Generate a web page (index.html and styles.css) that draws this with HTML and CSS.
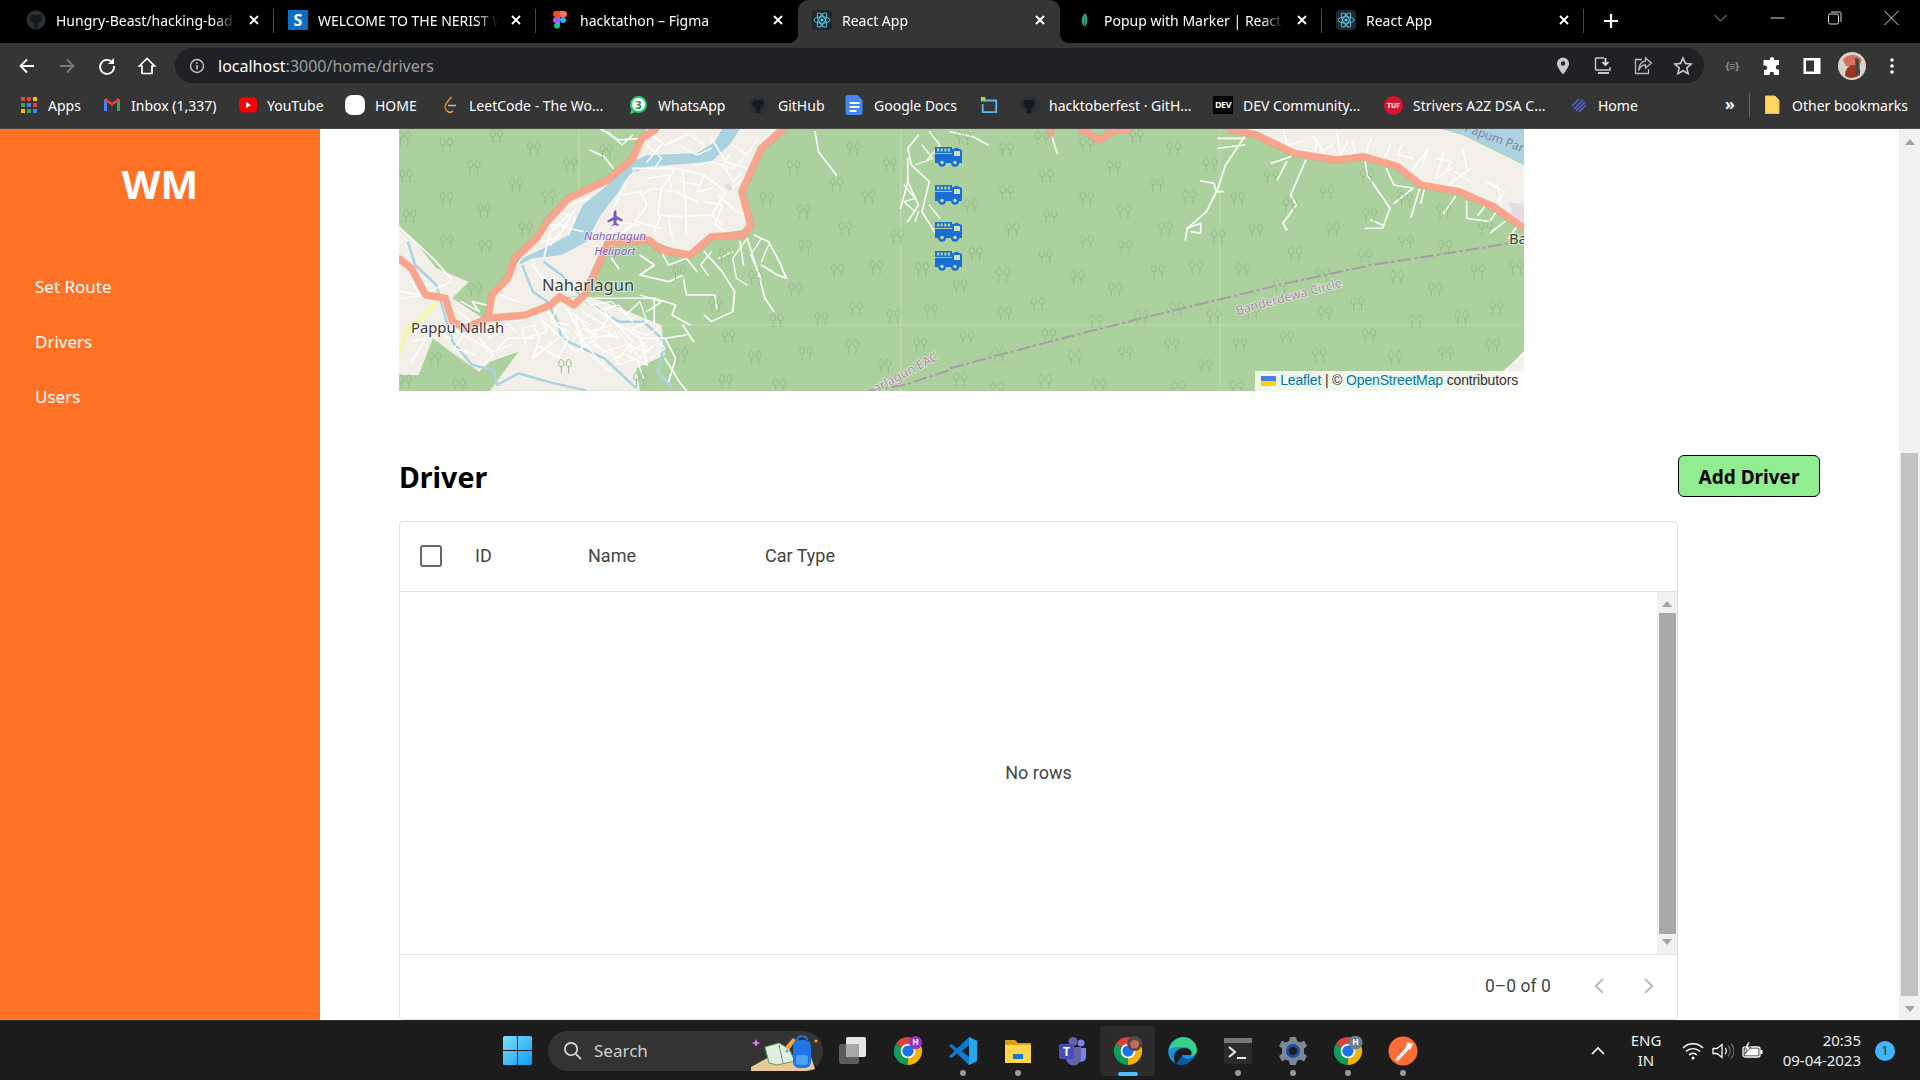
FILE: index.html
```html
<!DOCTYPE html>
<html lang="en">
<head>
<meta charset="utf-8">
<title>React App</title>
<link rel="stylesheet" href="styles.css">
</head>
<body>
<svg class="defs" aria-hidden="true">
  <defs>
    <g id="tree" class="tree" transform="scale(1.15)"><path d="M-9 18V-2M9 18V-2"/><path d="M-9 -20C-15 -14 -17 -6 -14 -2C-12 1 -6 1 -4 -2C-1 -6 -3 -14 -9 -20Z"/><path d="M9 -20C3 -14 1 -6 4 -2C6 1 12 1 14 -2C17 -6 15 -14 9 -20Z"/></g>
    <symbol id="truck" viewBox="0 0 27 23"><path fill="#1a6fd6" fill-rule="evenodd" d="M0 3h17v6H0zM2 4.600v2.800h2.200V4.600zM5.600 4.600v2.800h2.200V4.600zM9.200 4.600v2.800h2.200V4.600zM12.800 4.600v2.800H15V4.600z"/><path fill="#1a6fd6" d="M0 10h17V5h2a3 3 0 0 1 5 0h.5A2.500 2.500 0 0 1 27 7.500V19H0z"/><rect x="19" y="7" width="6" height="5" fill="#cfe3c4"/><circle cx="7" cy="18.500" r="4.200" fill="#1a6fd6"/><circle cx="7" cy="18.500" r="1.700" fill="#cfe3c4"/><circle cx="20" cy="18.500" r="4.200" fill="#1a6fd6"/><circle cx="20" cy="18.500" r="1.700" fill="#cfe3c4"/></symbol>
    <symbol id="gh" viewBox="0 0 20 20"><circle cx="10" cy="10" r="9.500" fill="#2a3138"/><path fill="#16191d" d="M5 6.500 5.600 4 8 5.200a8 8 0 0 1 4 0L14.400 4l.6 2.500c1.300 1.600 1.200 5.200-1.500 6.300-.7.3-1.300.4-1.300 1.200V18H7.800v-4c0-.8-.6-.9-1.300-1.200C3.800 11.700 3.700 8.100 5 6.500Z"/></symbol>
    <symbol id="react" viewBox="0 0 20 20"><rect width="20" height="20" rx="4" fill="#20272e"/><g fill="none" stroke="#61dafb" stroke-width=".9"><ellipse cx="10" cy="10" rx="8" ry="3.200"/><ellipse cx="10" cy="10" rx="8" ry="3.200" transform="rotate(60 10 10)"/><ellipse cx="10" cy="10" rx="8" ry="3.200" transform="rotate(120 10 10)"/></g><circle cx="10" cy="10" r="1.500" fill="#61dafb"/></symbol>
    <symbol id="x" viewBox="0 0 12 12"><path d="M2 2l8 8M10 2l-8 8" stroke="#fff" stroke-width="1.800" fill="none"/></symbol>
    <symbol id="chrome" viewBox="0 0 32 32"><path fill="#db4437" d="M16 16 3 8.500A15 15 0 0 1 29 8.500Z"/><path fill="#0f9d58" d="M16 16 3 8.500A15 15 0 0 0 16 31Z"/><path fill="#f4b400" d="M16 16 29 8.500A15 15 0 0 1 16 31Z"/><circle cx="16" cy="16" r="7.800" fill="#fff"/><circle cx="16" cy="16" r="6" fill="#1a73e8"/></symbol>
  </defs>
</svg>

<header class="tabstrip">
  <div class="tab sep"><svg class="fav"><use href="#gh"/></svg><span class="tab-title">Hungry-Beast/hacking-bad-</span><svg class="tab-x"><use href="#x"/></svg></div>
  <div class="tab sep"><span class="fav fav-s">S</span><span class="tab-title">WELCOME TO THE NERIST WEBSITE</span><svg class="tab-x"><use href="#x"/></svg></div>
  <div class="tab"><svg class="fav" viewBox="0 0 20 20"><path fill="#f24e1e" d="M6 1h4v6H6a3 3 0 0 1 0-6z"/><path fill="#ff7262" d="M10 1h4a3 3 0 0 1 0 6h-4z"/><path fill="#a259ff" d="M6 7h4v6H6a3 3 0 0 1 0-6z"/><circle cx="13" cy="10" r="3" fill="#1abcfe"/><path fill="#0acf83" d="M6 13h4v3a3 3 0 1 1-4-3z"/></svg><span class="tab-title">hacktathon – Figma</span><svg class="tab-x"><use href="#x"/></svg></div>
  <div class="tab tab-active"><svg class="fav"><use href="#react"/></svg><span class="tab-title">React App</span><svg class="tab-x"><use href="#x"/></svg></div>
  <div class="tab sep"><svg class="fav" viewBox="0 0 20 20"><path fill="#2f9d7e" d="M11 3c3 3 3.500 9 0 14-4-2-5-9 0-14z"/><path fill="#0b3b2e" d="M11 6v10l-1 2z"/></svg><span class="tab-title">Popup with Marker | React Leaflet</span><svg class="tab-x"><use href="#x"/></svg></div>
  <div class="tab sep"><svg class="fav"><use href="#react"/></svg><span class="tab-title">React App</span><svg class="tab-x"><use href="#x"/></svg></div>
  <div class="newtab"><svg viewBox="0 0 20 20"><path d="M10 3v14M3 10h14" stroke="#fff" stroke-width="2.200"/></svg></div>
  <div class="winctl">
    <svg viewBox="0 0 14 14"><path d="M1 4l6 6 6-6" fill="none" stroke="#aaa"/></svg>
    <svg viewBox="0 0 14 14"><path d="M0 7h14" stroke="#ddd"/></svg>
    <svg viewBox="0 0 14 14"><rect x="1" y="3" width="10" height="10" rx="1.500" fill="none" stroke="#ddd"/><path d="M3.500 1H12a1.500 1.500 0 0 1 1.500 1.500V11" fill="none" stroke="#ddd"/></svg>
    <svg viewBox="0 0 14 14"><path d="M0 0l14 14M14 0 0 14" stroke="#ddd"/></svg>
  </div>
</header>

<nav class="toolbar">
  <div class="tool"><svg viewBox="0 0 20 20"><path d="M17 10H4M10 3.500 3.500 10l6.500 6.500" fill="none" stroke="#fff" stroke-width="1.800"/></svg></div>
  <div class="tool"><svg viewBox="0 0 20 20"><path d="M3 10h13M10 3.500l6.500 6.500-6.500 6.500" fill="none" stroke="#7a7a7a" stroke-width="1.800"/></svg></div>
  <div class="tool"><svg viewBox="0 0 20 20"><path d="M15.500 6.500A7 7 0 1 0 17 10" fill="none" stroke="#fff" stroke-width="1.800"/><path d="M17 2v6h-6z" fill="#fff"/></svg></div>
  <div class="tool"><svg viewBox="0 0 20 20"><path d="M10 2.500 2.500 10H5v7.500h10V10h2.500z" fill="none" stroke="#fff" stroke-width="1.700"/></svg></div>
  <div class="omni">
    <svg class="info" viewBox="0 0 16 16"><circle cx="8" cy="8" r="6.500" fill="none" stroke="#c6c6c6" stroke-width="1.400"/><path d="M8 7v4.500M8 4.300v1.600" stroke="#c6c6c6" stroke-width="1.500"/></svg>
    <div class="url"><span class="url-host">localhost</span>:3000/home/drivers</div>
    <div class="tool"><svg viewBox="0 0 20 20"><path fill="#c8c8c8" d="M10 1.500a6 6 0 0 0-6 6c0 4.200 6 11 6 11s6-6.800 6-11a6 6 0 0 0-6-6zm0 8.200a2.200 2.200 0 1 1 0-4.400 2.200 2.200 0 0 1 0 4.400z"/></svg></div>
    <div class="tool"><svg viewBox="0 0 20 20"><path d="M11 2H3.500a1 1 0 0 0-1 1v10a1 1 0 0 0 1 1H17v-3" fill="none" stroke="#c8c8c8" stroke-width="1.500"/><path d="M12.500 2v6M9.500 6l3 3 3-3" fill="none" stroke="#e8e8e8" stroke-width="1.700"/><path d="M5 16h11v2H5z" fill="#c8c8c8"/></svg></div>
    <div class="tool"><svg viewBox="0 0 20 20"><path d="M9 3.500H2.500v14h13V13" fill="none" stroke="#bbb" stroke-width="1.300"/><path d="M12.500 2l6 5-6 5V9C9 9 7 11 5.500 14.500 6 9 8.500 5.500 12.500 5z" fill="none" stroke="#bbb" stroke-width="1.300"/></svg></div>
    <div class="tool"><svg viewBox="0 0 20 20"><path d="m10 2 2.400 5.400 5.800.6-4.400 3.900 1.300 5.800L10 14.700l-5.100 3 1.300-5.800L1.800 8l5.800-.6z" fill="none" stroke="#c8c8c8" stroke-width="1.600"/></svg></div>
  </div>
  <div class="tool-right">
    <div class="tool"><span class="ext-mini">{≡}</span></div>
    <div class="tool"><svg viewBox="0 0 20 20"><path fill="#fff" d="M8 3a2 2 0 0 1 4 0v1h5v5h-1a2.300 2.300 0 0 0 0 4.600h1V19h-5v-1a2.200 2.200 0 0 0-4.400 0v1H2v-5h1a2.300 2.300 0 0 0 0-4.600H1.500V4H8z"/></svg></div>
    <div class="tool"><svg viewBox="0 0 20 20"><rect x="1.500" y="2" width="17" height="16" fill="#fff"/><rect x="4" y="4.500" width="8" height="11" fill="#353535"/></svg></div>
    <div class="tool tool-avatar"><svg viewBox="0 0 28 28"><circle cx="14" cy="14" r="14" fill="#d9d3cc"/><path d="M5 8c3-6 15-7 19 0l-3 6H8z" fill="#d8705c"/><path d="M7 24c0-7 4-11 8-11s7 4 7 10a14 14 0 0 1-15 1z" fill="#9c3526"/><path d="M17 6l4 1 1 14-4 3z" fill="#4a4640"/></svg></div>
    <div class="tool"><svg viewBox="0 0 20 20"><circle cx="10" cy="4" r="1.800" fill="#fff"/><circle cx="10" cy="10" r="1.800" fill="#fff"/><circle cx="10" cy="16" r="1.800" fill="#fff"/></svg></div>
  </div>
</nav>

<nav class="bookmarks">
  <div class="bm bm-apps"><svg viewBox="0 0 18 18"><rect x="1" y="1" width="4" height="4" fill="#ea4335"/><rect x="7" y="1" width="4" height="4" fill="#ea4335"/><rect x="13" y="1" width="4" height="4" fill="#fbbc04"/><rect x="1" y="7" width="4" height="4" fill="#34a853"/><rect x="7" y="7" width="4" height="4" fill="#4285f4"/><rect x="13" y="7" width="4" height="4" fill="#ea4335"/><rect x="1" y="13" width="4" height="4" fill="#fbbc04"/><rect x="7" y="13" width="4" height="4" fill="#34a853"/><rect x="13" y="13" width="4" height="4" fill="#4285f4"/></svg><span>Apps</span></div>
  <div class="bm bm-inbox"><svg viewBox="0 0 18 18"><path fill="#4285f4" d="M1 15V4l3 2v9z"/><path fill="#34a853" d="M14 15V6l3-2v11z"/><path fill="#ea4335" d="M1 4c0-1.500 1.500-2 2.500-1.200L9 7l5.500-4.200C15.500 2 17 2.500 17 4l-8 6z"/></svg><span>Inbox (1,337)</span></div>
  <div class="bm bm-yt"><svg viewBox="0 0 18 18"><rect y="1.500" width="18" height="15" rx="4" fill="#f00"/><path d="M7 6v6l5-3z" fill="#fff"/></svg><span>YouTube</span></div>
  <div class="bm bm-home"><svg class="ic20" viewBox="0 0 20 20"><rect width="20" height="20" rx="7" fill="#fff"/></svg><span>HOME</span></div>
  <div class="bm bm-leet"><svg viewBox="0 0 18 18"><path d="M10 1 5 8c-1.500 2-1 5 1 7" fill="none" stroke="#c9892f" stroke-width="1.600"/><path d="M6 15c2 1.800 4 1.800 6 0" fill="none" stroke="#f0a030" stroke-width="1.600"/><path d="M7 9.500h8" stroke="#b8b8b8" stroke-width="1.600"/><circle cx="10" cy="2" r="1.200" fill="#d6522c"/></svg><span>LeetCode - The Wo...</span></div>
  <div class="bm bm-wa"><svg class="ic20" viewBox="0 0 20 20"><circle cx="10.500" cy="9.500" r="8.500" fill="#25d366"/><path d="M2 19l1.500-5 3.500 3.500z" fill="#25d366"/><circle cx="10.500" cy="9.500" r="6.500" fill="#fff"/><text x="10.500" y="13.500" class="wa-num">3</text></svg><span>WhatsApp</span></div>
  <div class="bm bm-gh"><svg class="ic20"><use href="#gh"/></svg><span>GitHub</span></div>
  <div class="bm bm-docs"><svg class="ic19" viewBox="0 0 18 20"><path d="M2 0h10l5 5v13a2 2 0 0 1-2 2H2a2 2 0 0 1-2-2V2a2 2 0 0 1 2-2z" fill="#4285f4"/><path d="M4 7h10v2H4zm0 4h10v2H4zm0 4h7v2H4z" fill="#fff"/></svg><span>Google Docs</span></div>
  <div class="bm bm-sq"><svg viewBox="0 0 20 20"><path d="M5 5h13v13H3V9" fill="none" stroke="#5ab8f0" stroke-width="2"/><rect x="1" y="1" width="5" height="5" fill="#9ad45a"/></svg></div>
  <div class="bm bm-hack"><svg class="ic20"><use href="#gh"/></svg><span>hacktoberfest · GitH...</span></div>
  <div class="bm bm-dev"><span class="dev-logo">DEV</span><span>DEV Community...</span></div>
  <div class="bm bm-tuf"><span class="tuf-logo">TUF</span><span>Strivers A2Z DSA C...</span></div>
  <div class="bm bm-ln"><svg viewBox="0 0 18 18"><path d="M2 10 9 3M4 13l9-9M6 15l9-9M9 16l7-7" stroke="#4d66e0" stroke-width="1.500" fill="none"/></svg><span>Home</span></div>
  <div class="bm-more">»</div>
  <div class="bm-other"><svg viewBox="0 0 16 20"><path d="M1.500 1H11l4 4v13.500H1.500z" fill="#fdd663" stroke="#f0c040"/></svg><span>Other bookmarks</span></div>
</nav>

<div class="page">
  <aside class="sidebar">
    <div class="logo">WM</div>
    <ul class="side-nav">
      <li>Set Route</li>
      <li>Drivers</li>
      <li>Users</li>
    </ul>
  </aside>

  <main class="main">
    <section class="map">
      <svg class="map-svg" viewBox="0 0 1125 262" width="1125" height="262">
        <rect width="1125" height="262" fill="#add19e"/>
        <!-- left half, coordinates read off the crop -->
        <g class="map-geo" transform="translate(-9 -4) scale(.3571 .3333)">
          <path class="seam" d="M760 600H1568M530 12V600M1430 12V797"/>
          <path class="urban" d="M720 12H1100L1040 70 985 200 1015 310 900 330 840 390 730 345 610 350 540 510 480 520 430 550 280 575 280 510 340 440 410 330 480 230 600 170 680 100Z"/>
          <path class="urban" d="M25 300 70 350 130 430 220 470 175 520 260 580 540 510 600 530 760 600 770 690 690 730 700 797H280L360 680 280 710 250 740 170 680 120 640 80 750 25 750Z"/>
          <path class="pale" d="M940 175l15 5 3 12-10 5-10-12z"/>
          <path class="water" d="M930 12H980L950 60 900 110 720 125 670 150 640 200 590 270 550 350 480 390 400 400 360 420 370 400 440 365 500 330 540 240 620 170 660 120 720 90 860 85 910 50Z"/>
          <path class="river" d="M370 420 400 500 440 530 470 590 480 640 600 700 690 790M430 410 480 450 550 530 640 590 710 590 770 650 750 740 790 790M50 350 70 420 130 480 150 560 175 650 230 720 290 735 300 780 360 745 440 770 550 797"/>
          <path class="road" d="M560 75 600 95 625 130M590 12 640 45 700 40M1190 20 1200 80 1250 150M680 130H800L880 150 940 200 900 270 800 275 750 270 760 190 800 130M880 150 860 200M720 20 770 60 830 30M760 60 720 110M900 40 940 110 1000 130M950 90 930 130M820 140 830 270M860 200 900 190M800 200 860 230M900 270 930 300M830 275 830 330M760 270 740 320M650 210 700 200 720 240 680 300 640 330M620 290 700 300M500 270 450 320 430 400M470 300 540 320M1020 330 1060 350 1090 410 1110 460 1085 450 1040 420M1000 340 1030 440 1050 520 1075 560M980 350 990 420M880 380 930 440 965 500 960 560 900 590 880 570M820 450 830 510 910 510 915 550M700 390 740 420 700 450 780 470 820 450M620 400 640 430M1450 100 1450 170 1430 250M1480 30 1450 70 1460 120 1510 170 1490 260 1530 330M1450 170 1480 240 1450 290M760 380 780 420 830 400 860 440M200 530 250 560 230 530 290 545M400 600 420 640 400 700 470 640M290 500 330 520 360 530M400 420 440 480 480 500M540 520 640 600 700 640 770 640 800 700 780 770M560 520 740 520 740 600M600 560 680 650 640 700 570 660M620 600 560 620 520 570 540 680M700 640 720 720 660 690M740 520 800 540 790 570 840 600M820 600 850 650M770 640 830 630M430 590 520 680 580 640M490 540 540 640 620 630M300 670 330 640 400 640M30 500 90 510 170 470M50 330 120 400 170 460M170 610 290 680 340 660M770 700 810 770 830 797M460 600 500 620M630 620 640 640 610 630"/>
          <path class="road road-thin" d="M690 130 660 170 640 220 620 260 650 300 600 340M720 160 780 150 790 200 740 190 700 210M810 170 870 180M860 120 900 110 960 130 990 100M960 60 1000 90 1030 40M940 130 960 170 980 150M920 210 970 260 1000 270M930 240 910 300 940 320M880 230 930 240M780 280 790 340M690 290 760 310M500 240 560 220M470 260 520 280 500 330M440 300 500 300M420 350 470 340M520 250 480 320 450 360M610 20 650 60 680 30M720 60 760 100 740 130M810 60 860 90 900 70M840 30 880 60M1000 150 960 190M560 540 620 530 660 570 700 530 720 590 680 610M540 560 600 600 560 640 600 680 660 660 720 680 690 620M640 620 700 700 740 660M610 660 640 720 690 700 710 760M560 690 620 740M500 560 560 600M440 560 500 640 470 700M350 590 420 570 440 620 380 640M230 600 280 640 320 600M190 560 240 600M90 520 60 470 110 480M30 520 110 510M210 620 180 670 240 690M130 620 170 640M60 650 100 640 60 710M410 660 480 700M250 640 290 690 260 720M700 510 760 530 720 560M1000 340 960 400 970 460 1000 480M1040 340 1010 390 1040 460M1060 360 1040 410M900 380 870 420 890 450M960 380 920 400M1490 60 1520 100 1470 120M1510 20 1540 60 1500 110M1440 180 1470 220 1440 230 1470 260M1480 260 1470 290M1510 240 1540 280M580 560 640 540 680 590M620 570 590 610 640 640M660 610 720 630 750 610M670 680 720 650M590 640 540 610 510 650M520 620 580 700M470 540 450 590 500 600M410 600 370 610 380 660M320 580 350 620M260 600 300 630M740 640 770 670 730 700"/>
          <path class="trunk-case" d="M745 12 705 40 680 100 610 165 500 220 440 290 410 340 350 400 330 460 285 510 275 580 380 570 450 540 475 515 515 540 545 510 610 355 725 345 760 375 840 390 900 335 990 330 1010 300 985 200 1040 70 1100 12M25 400 60 430 100 510 155 520 175 590 210 610 275 580"/>
          <path class="trunk" d="M745 12 705 40 680 100 610 165 500 220 440 290 410 340 350 400 330 460 285 510 275 580 380 570 450 540 475 515 515 540 545 510 610 355 725 345 760 375 840 390 900 335 990 330 1010 300 985 200 1040 70 1100 12M25 400 60 430 100 510 155 520 175 590 210 610 275 580"/>
          <path class="yellow" d="M128 535 90 580 50 610 28 680"/>
          <path class="border-line" d="M1340 797 1440 780 1568 735"/>
          <use href="#tree" x="40" y="40"/><use href="#tree" x="158" y="60"/><use href="#tree" x="298" y="35"/><use href="#tree" x="403" y="72"/><use href="#tree" x="235" y="128"/><use href="#tree" x="505" y="120"/><use href="#tree" x="45" y="155"/><use href="#tree" x="353" y="180"/><use href="#tree" x="445" y="218"/><use href="#tree" x="158" y="222"/><use href="#tree" x="55" y="275"/><use href="#tree" x="263" y="258"/><use href="#tree" x="380" y="312"/><use href="#tree" x="158" y="352"/><use href="#tree" x="267" y="367"/><use href="#tree" x="238" y="495"/><use href="#tree" x="125" y="703"/><use href="#tree" x="42" y="772"/><use href="#tree" x="193" y="783"/><use href="#tree" x="490" y="725"/><use href="#tree" x="700" y="765"/><use href="#tree" x="815" y="690"/><use href="#tree" x="940" y="772"/><use href="#tree" x="948" y="635"/><use href="#tree" x="1022" y="700"/><use href="#tree" x="1165" y="687"/><use href="#tree" x="1295" y="665"/><use href="#tree" x="1485" y="660"/><use href="#tree" x="1385" y="725"/><use href="#tree" x="1090" y="783"/><use href="#tree" x="1083" y="587"/><use href="#tree" x="1208" y="582"/><use href="#tree" x="1305" y="552"/><use href="#tree" x="1410" y="575"/><use href="#tree" x="1515" y="560"/><use href="#tree" x="1135" y="495"/><use href="#tree" x="1023" y="460"/><use href="#tree" x="1253" y="438"/><use href="#tree" x="1362" y="428"/><use href="#tree" x="1490" y="435"/><use href="#tree" x="1162" y="368"/><use href="#tree" x="1275" y="312"/><use href="#tree" x="1420" y="335"/><use href="#tree" x="1055" y="222"/><use href="#tree" x="1158" y="260"/><use href="#tree" x="1340" y="218"/><use href="#tree" x="1250" y="180"/><use href="#tree" x="1130" y="128"/><use href="#tree" x="1298" y="72"/><use href="#tree" x="1400" y="120"/><use href="#tree" x="605" y="80"/><use href="#tree" x="938" y="393"/><use href="#tree" x="810" y="445"/><use href="#tree" x="912" y="540"/>
        </g>
        <!-- right half -->
        <g class="map-geo" transform="translate(551 -4) scale(.3827 .3333)">
          <path class="seam" d="M0 600H1500M705 12V797"/>
          <path class="urban" d="M740 12H1285L1340 30 1500 120V310L1420 245 1330 200 1230 180 1170 125 1080 95 1010 105 900 85 800 30Z"/>
          <path class="urban" d="M1390 797 1500 680V797Z"/>
          <path class="pale" d="M1460 230 1500 240V300L1470 270Z"/>
          <path class="water" d="M1285 12H1500V120L1400 60 1340 30Z"/>
          <path class="road" d="M0 20 60 35 100 60M265 30 280 85M770 35 720 120 700 190 670 260 620 310 615 345M620 310 655 295 655 325 630 320M655 168 690 175 695 200 715 200M700 40H770M700 70 770 60M930 105 890 210 905 240 870 295 880 315M890 95 840 115M880 110 855 165M1085 110 1090 150 1150 250 1130 310 1085 310M1100 285 1130 300M1140 130 1160 180 1210 190 1160 235M1250 70 1200 150M1230 180 1205 275M1240 190 1230 235M870 12 880 60 920 50M950 35 980 90M1010 15 1020 90 1040 50M1100 40 1085 90M1150 60 1130 110M1250 70 1230 130M1290 80 1270 160 1310 130M1360 130 1290 190M1430 180 1440 240 1410 290M1350 230 1350 280 1410 290M1320 215 1290 265M1380 270 1400 240M1450 290 1410 325M1460 340 1490 290M1480 710 1500 680M1440 790 1500 730M1270 100 1310 110 1290 150M1320 140 1360 170M1180 60 1170 90 1210 100M1340 70 1350 130M1400 170 1450 200 1430 230M960 50 950 90 1000 60M1050 50 1060 80 1040 90"/>
          <path class="trunk-case" d="M262 12V30M340 12 390 45 430 15 470 12M730 12 800 30 900 85 1010 105 1080 95 1170 125 1230 180 1330 200 1420 245 1500 310"/>
          <path class="trunk" d="M262 12V30M340 12 390 45 430 15 470 12M730 12 800 30 900 85 1010 105 1080 95 1170 125 1230 180 1330 200 1420 245 1500 310"/>
          <path class="border-line" d="M0 730 260 650 500 580 860 480 1100 420 1300 385 1460 355"/>
          <use href="#tree" x="35" y="40"/><use href="#tree" x="148" y="75"/><use href="#tree" x="240" y="40"/><use href="#tree" x="357" y="60"/><use href="#tree" x="487" y="35"/><use href="#tree" x="585" y="72"/><use href="#tree" x="428" y="128"/><use href="#tree" x="680" y="120"/><use href="#tree" x="252" y="155"/><use href="#tree" x="148" y="203"/><use href="#tree" x="540" y="180"/><use href="#tree" x="625" y="218"/><use href="#tree" x="752" y="222"/><use href="#tree" x="357" y="222"/><use href="#tree" x="55" y="245"/><use href="#tree" x="262" y="275"/><use href="#tree" x="455" y="260"/><use href="#tree" x="163" y="315"/><use href="#tree" x="563" y="312"/><use href="#tree" x="700" y="335"/><use href="#tree" x="800" y="318"/><use href="#tree" x="1000" y="315"/><use href="#tree" x="357" y="352"/><use href="#tree" x="458" y="368"/><use href="#tree" x="250" y="395"/><use href="#tree" x="67" y="387"/><use href="#tree" x="902" y="387"/><use href="#tree" x="1085" y="395"/><use href="#tree" x="1192" y="352"/><use href="#tree" x="1293" y="368"/><use href="#tree" x="138" y="450"/><use href="#tree" x="333" y="460"/><use href="#tree" x="543" y="440"/><use href="#tree" x="643" y="428"/><use href="#tree" x="765" y="437"/><use href="#tree" x="973" y="450"/><use href="#tree" x="1168" y="460"/><use href="#tree" x="1380" y="440"/><use href="#tree" x="1480" y="428"/><use href="#tree" x="27" y="485"/><use href="#tree" x="432" y="495"/><use href="#tree" x="863" y="485"/><use href="#tree" x="1268" y="495"/><use href="#tree" x="230" y="538"/><use href="#tree" x="143" y="567"/><use href="#tree" x="690" y="575"/><use href="#tree" x="790" y="562"/><use href="#tree" x="980" y="567"/><use href="#tree" x="1065" y="538"/><use href="#tree" x="1428" y="550"/><use href="#tree" x="382" y="590"/><use href="#tree" x="500" y="580"/><use href="#tree" x="592" y="552"/><use href="#tree" x="1218" y="590"/><use href="#tree" x="1337" y="580"/><use href="#tree" x="45" y="640"/><use href="#tree" x="258" y="633"/><use href="#tree" x="580" y="663"/><use href="#tree" x="758" y="660"/><use href="#tree" x="880" y="640"/><use href="#tree" x="1095" y="633"/><use href="#tree" x="1418" y="663"/><use href="#tree" x="327" y="700"/><use href="#tree" x="460" y="687"/><use href="#tree" x="127" y="690"/><use href="#tree" x="965" y="690"/><use href="#tree" x="1163" y="700"/><use href="#tree" x="1297" y="687"/><use href="#tree" x="667" y="725"/><use href="#tree" x="27" y="765"/><use href="#tree" x="248" y="772"/><use href="#tree" x="390" y="783"/><use href="#tree" x="597" y="790"/><use href="#tree" x="123" y="795"/><use href="#tree" x="750" y="790"/><use href="#tree" x="840" y="155"/><use href="#tree" x="1090" y="155"/><use href="#tree" x="888" y="240"/><use href="#tree" x="1097" y="270"/><use href="#tree" x="1290" y="258"/><use href="#tree" x="1400" y="310"/><use href="#tree" x="985" y="203"/><use href="#tree" x="1190" y="225"/>
        </g>
        <path class="plane" d="M216 81c1 0 1.500 1 1.500 2.500V87l6 3.500v2l-6-2v3.500l2 1.500v1.500l-3.500-1-3.500 1V96.500l2-1.500v-3.500l-6 2v-2l6-3.500v-3.500c0-1.500.5-2.500 1.500-2.500z"/>
        <text class="lbl-air" x="216" y="111">Naharlagun</text>
        <text class="lbl-air" x="216" y="126">Heliport</text>
        <text class="lbl-town" x="143" y="162">Naharlagun</text>
        <text class="lbl-small" x="12" y="204">Pappu Nallah</text>
        <text class="lbl-small" x="1110" y="115">Ba</text>
        <text class="lbl-bound" transform="translate(838 186) rotate(-15)">Banderdewa Circle</text>
        <text class="lbl-bound" transform="translate(477 264) rotate(-28)">arlagun EAC</text>
        <text class="lbl-river" transform="translate(1065 2) rotate(20)">Papum Par</text>
        <use href="#truck" x="536" y="15" width="27" height="23"/>
        <use href="#truck" x="536" y="53" width="27" height="23"/>
        <use href="#truck" x="536" y="90" width="27" height="23"/>
        <use href="#truck" x="536" y="119" width="27" height="23"/>
      </svg>
      <div class="attrib"><svg class="flag" viewBox="0 0 12 8"><rect width="12" height="4" fill="#4c7be1"/><rect y="4" width="12" height="4" fill="#ffd500"/></svg> <a>Leaflet</a> | © <a>OpenStreetMap</a> contributors</div>
    </section>

    <div class="head-row">
      <h2 class="title">Driver</h2>
      <button class="add-btn">Add Driver</button>
    </div>

    <section class="grid">
      <div class="grid-head">
        <div class="cell cell-check"><span class="checkbox"></span></div>
        <div class="cell cell-id">ID</div>
        <div class="cell cell-name">Name</div>
        <div class="cell">Car Type</div>
      </div>
      <div class="grid-body">
        <span class="empty">No rows</span>
        <div class="grid-scroll">
          <svg class="arrow" viewBox="0 0 10 6"><path d="M5 0l5 6H0z"/></svg>
          <div class="grid-thumb"></div>
          <svg class="arrow" viewBox="0 0 10 6"><path d="M0 0h10L5 6z"/></svg>
        </div>
      </div>
      <div class="grid-foot">
        <span class="count">0–0 of 0</span>
        <svg class="pager pager-prev" viewBox="0 0 14 20"><path d="M11 3 4 10l7 7"/></svg>
        <svg class="pager" viewBox="0 0 14 20"><path d="m3 3 7 7-7 7"/></svg>
      </div>
    </section>
  </main>

  <div class="page-scroll">
    <svg class="arrow" viewBox="0 0 10 6"><path d="M5 0l5 6H0z"/></svg>
    <div class="page-thumb"></div>
    <svg class="arrow" viewBox="0 0 10 6"><path d="M0 0h10L5 6z"/></svg>
  </div>
</div>

<footer class="taskbar">
  <div class="tb-win"><svg viewBox="0 0 29 29"><defs><linearGradient id="w" x1="0" y1="0" x2="1" y2="1"><stop offset="0" stop-color="#7ee0fb"/><stop offset="1" stop-color="#0d9bf2"/></linearGradient></defs><path fill="url(#w)" d="M0 1.500A1.500 1.500 0 0 1 1.500 0H14v14H0zM15 0h12.500A1.500 1.500 0 0 1 29 1.500V14H15zM0 15h14v14H1.500A1.500 1.500 0 0 1 0 27.500zM15 15h14v12.500a1.500 1.500 0 0 1-1.500 1.500H15z"/></svg></div>
  <div class="tb-search">
    <svg class="tb-glass" viewBox="0 0 20 20"><circle cx="8.500" cy="8.500" r="6.500" fill="none" stroke="#ddd" stroke-width="1.800"/><path d="M13.500 13.500 19 19" stroke="#ddd" stroke-width="1.800"/></svg>
    <span>Search</span>
    <svg class="tb-art" viewBox="0 0 72 36"><path d="M2 32 20 22H62L66 34 58 36H2z" fill="#e9c89a"/><path d="M16 12 30 8 40 14 46 26 28 30 20 28z" fill="#dfeedd" stroke="#5ba05b"/><path d="M30 10 34 28" stroke="#88a"/><path d="M36 12 44 3l3 2-7 10z" fill="#f4a43c"/><path d="M7 4l1.500 3 3 1-3 1L7 12 5.500 9l-3-1 3-1z" fill="#d57cf0"/><circle cx="38" cy="16" r="1.500" fill="#5ad"/><rect x="44" y="5" width="18" height="28" rx="6" fill="#1f74e8"/><rect x="47" y="20" width="12" height="10" rx="3" fill="#4aa3f8"/><path d="M48 5c0-5 10-5 10 0" fill="none" stroke="#1f74e8" stroke-width="2"/><circle cx="67" cy="6" r="1.500" fill="#f5a623"/></svg>
  </div>
  <div class="tb-icons">
    <div class="tb-i"><svg viewBox="0 0 30 30"><rect x="1" y="8" width="20" height="20" rx="2" fill="#5c5c5c"/><rect x="8" y="1" width="20" height="20" rx="2" fill="#e6e6e6"/><rect x="8" y="8" width="13" height="13" fill="#a8a8a8"/></svg></div>
    <div class="tb-i"><svg viewBox="0 0 32 32"><use href="#chrome"/><circle cx="24" cy="7" r="7" fill="#9334c4"/><text x="24" y="10" class="badge-h">H</text></svg></div>
    <div class="tb-i dot"><svg viewBox="0 0 30 30"><path fill="#0a7cd1" d="M21 1 29 5v20l-8 4L9 17.500 3.500 22 1 20.500 6.500 15 1 9.500 3.500 8 9 12.500z"/><path fill="#26a6f0" d="M21 1 29 5v20l-8 4z"/><path fill="#1c1c1c" d="M21 9.500 13.500 15l7.500 5.500z"/></svg></div>
    <div class="tb-i dot"><svg viewBox="0 0 30 30"><path fill="#d9a01a" d="M2 4h10l3 3h13v5H2z"/><path fill="#ffd54a" d="M2 9h26v18H2z"/><path fill="#0e7ad1" d="M10 18h10v5H10z"/></svg></div>
    <div class="tb-i"><svg viewBox="0 0 30 30"><circle cx="23" cy="7" r="3.500" fill="#7b83eb"/><path d="M17 12h11v9a5 5 0 0 1-10 0z" fill="#7b83eb"/><circle cx="15" cy="5.500" r="4.500" fill="#6264a7"/><path d="M8 11h15v11a7.500 7.500 0 0 1-15 0z" fill="#6264a7"/><rect x="1" y="8" width="15" height="15" rx="1.500" fill="#464eb8"/><text x="8.500" y="20" class="badge-t">T</text></svg></div>
    <div class="tb-i tb-active"><svg viewBox="0 0 32 32"><use href="#chrome"/><circle cx="23" cy="8" r="8" fill="#5f4540"/><path d="M18 8c1-5 9-5 10 0l-2 5h-6z" fill="#c46a5c"/></svg></div>
    <div class="tb-i"><svg viewBox="0 0 30 30"><path d="M28 18A14 14 0 1 0 8 28C3 22 7 12 16 12c6 0 9 4 7 7h-9c0 5 9 7 14-1z" fill="#1493d8"/><path d="M1 14C3 5 10 1 15 1c8 0 14 6 14 13 0 4-3 6-6 6 3-5-2-9-7-9-7 0-13 0-15 3z" fill="#36d08a"/><path d="M8 28c4 2 14 2 20-9-4 5-12 5-14 1-2 2-4 6-6 8z" fill="#0c59a4"/></svg></div>
    <div class="tb-i dot"><svg viewBox="0 0 30 30"><rect x="1" y="2" width="28" height="26" rx="2" fill="#2b2b2b"/><rect x="1" y="2" width="28" height="5" fill="#777"/><path d="M6 11l6 5-6 5" fill="none" stroke="#eee" stroke-width="2"/><path d="M14 22h9" stroke="#eee" stroke-width="2"/></svg></div>
    <div class="tb-i dot"><svg viewBox="0 0 30 30"><path fill="#7c8795" d="M12 1h6l1 4 3.500 1.500L26 4.500 29 10l-3 2.500v5l3 2.500-3 5.500-3.500-2L19 25l-1 4h-6l-1-4-3.500-1.500-3.500 2L1 20l3-2.500v-5L1 10l3-5.500 3.500 2L11 5z"/><circle cx="15" cy="15" r="7" fill="#1a4fa0"/><circle cx="15" cy="15" r="4" fill="#1c1c1c"/></svg></div>
    <div class="tb-i dot"><svg viewBox="0 0 32 32"><use href="#chrome"/><circle cx="24" cy="7" r="7.500" fill="#6b7f90"/><text x="24" y="10" class="badge-h">H</text></svg></div>
    <div class="tb-i dot"><svg viewBox="0 0 30 30"><circle cx="15" cy="15" r="14.500" fill="#ff6c37"/><path d="M7 24 19 10l3 2L10 25z" fill="#fff"/><path d="M19 6l6 2-3 6-4-3z" fill="#fff"/></svg></div>
  </div>
  <div class="tray">
    <svg class="tray-chev" viewBox="0 0 14 10"><path d="M1 8l6-6 6 6" fill="none" stroke="#fff" stroke-width="1.700"/></svg>
    <div class="tray-lang"><span>ENG</span><span>IN</span></div>
    <svg class="tray-ic" viewBox="0 0 22 18"><path d="M1 6a14 14 0 0 1 20 0M4 9.500a10 10 0 0 1 14 0M7 13a5.500 5.500 0 0 1 8 0" fill="none" stroke="#fff" stroke-width="1.400"/><circle cx="11" cy="16" r="1.500" fill="#fff"/></svg>
    <svg class="tray-ic" viewBox="0 0 22 18"><path d="M1 6.500h4L10 2.500v13L5 11.500H1z" fill="none" stroke="#fff" stroke-width="1.300"/><path d="M13 6a4 4 0 0 1 0 6" fill="none" stroke="#fff" stroke-width="1.200"/><path d="M16 3.500a8 8 0 0 1 0 11M19 1.500a11 11 0 0 1 0 15" fill="none" stroke="#666" stroke-width="1.200"/></svg>
    <svg class="tray-ic" viewBox="0 0 22 18"><rect x="1" y="5" width="17" height="10" rx="2" fill="none" stroke="#fff" stroke-width="1.300"/><rect x="2.500" y="6.500" width="14" height="7" fill="#fff"/><rect x="18.500" y="8" width="2" height="4" fill="#fff"/><path d="M6 0 2 7h3L3 12l6-7H6l2-5z" fill="#fff" stroke="#1c1c1c" stroke-width=".7"/></svg>
    <div class="tray-clock"><span>20:35</span><span>09-04-2023</span></div>
    <span class="tray-badge">1</span>
  </div>
</footer>
</body>
</html>
```

FILE: styles.css
```css
* { box-sizing: border-box; }
html, body { margin: 0; height: 100%; }
body {
  width: 1920px;
  height: 1080px;
  overflow: hidden;
  display: flex;
  flex-direction: column;
  background: #fff;
  font-family: "Noto Sans", "Open Sans", sans-serif;
}
.defs { position: absolute; width: 0; height: 0; }
svg { display: block; }

/* tab strip */
.tabstrip { height: 43px; background: #000; display: flex; padding-left: 12px; flex: none; }
.tab {
  position: relative;
  width: 262px;
  height: 43px;
  display: flex;
  align-items: center;
  padding: 0 0 3px 14px;
  color: #fff;
  font-size: 14px;
  letter-spacing: 0;
}
.tab.sep::after {
  content: "";
  position: absolute;
  right: 0;
  top: 9px;
  height: 24px;
  width: 1px;
  background: #4a4a4a;
}
.tab-active { background: #353535; border-radius: 10px 10px 0 0; }
.tab-active::before, .tab-active::after {
  content: "";
  position: absolute;
  bottom: 0;
  width: 10px;
  height: 10px;
}
.tab-active::before { left: -10px; background: radial-gradient(circle at 0 0, #000 10px, #353535 10.5px); }
.tab-active::after { right: -10px; background: radial-gradient(circle at 100% 0, #000 10px, #353535 10.5px); }
.fav { width: 20px; height: 20px; flex: none; }
.fav-s {
  background: #0a6fc2;
  color: #fff;
  font-size: 16px;
  font-weight: 700;
  line-height: 20px;
  text-align: center;
  letter-spacing: 0;
}
.tab-title {
  margin-left: 10px;
  width: 180px;
  white-space: nowrap;
  overflow: hidden;
  -webkit-mask-image: linear-gradient(90deg, #000 88%, transparent);
  mask-image: linear-gradient(90deg, #000 88%, transparent);
}
.tab-x { width: 12px; height: 12px; margin-left: 12px; flex: none; }
.newtab { width: 56px; height: 43px; padding: 11px 17px 0 17px; flex: none; }
.newtab svg { width: 20px; height: 20px; }
.winctl { margin-left: auto; display: flex; height: 36px; flex: none; }
.winctl svg { width: 57px; height: 14px; margin-top: 11px; }

/* toolbar */
.toolbar {
  height: 45px;
  background: #353535;
  display: flex;
  align-items: center;
  padding: 0 0 0 7px;
  flex: none;
}
.tool { width: 40px; height: 35px; display: flex; align-items: center; justify-content: center; flex: none; }
.tool svg { width: 20px; height: 20px; }
.tool-avatar svg { width: 28px; height: 28px; }
.omni {
  width: 1529px;
  height: 35px;
  margin-left: 8px;
  background: #202124;
  border-radius: 18px;
  display: flex;
  align-items: center;
  padding: 0 1px 0 14px;
  flex: none;
}
.info { width: 16px; height: 16px; flex: none; }
.url { margin-left: 13px; font-size: 16px; color: #9aa0a6; flex: 1; }
.url-host { color: #fff; }
.tool-right { display: flex; margin-left: 8px; }
.ext-mini { color: #8a8a8a; font-size: 11px; font-weight: 700; letter-spacing: -.5px; }

/* bookmarks */
.bookmarks {
  height: 41px;
  background: #353535;
  border-bottom: 1px solid #4a4a4a;
  display: flex;
  align-items: center;
  padding: 0 0 6px 20px;
  color: #fff;
  font-size: 14px;
  flex: none;
}
.bm { display: flex; align-items: center; gap: 10px; white-space: nowrap; flex: none; }
.bm svg { width: 18px; height: 18px; flex: none; }
.bm svg.ic20 { width: 20px; height: 20px; }
.bm svg.ic19 { width: 19px; height: 20px; }
.bm-apps { width: 83px; }
.bm-inbox { width: 136px; }
.bm-yt { width: 106px; }
.bm-home { width: 96px; }
.bm-leet { width: 187px; }
.bm-wa { width: 120px; }
.bm-gh { width: 97px; }
.bm-docs { width: 135px; }
.bm-sq { width: 39px; }
.bm-hack { width: 194px; }
.bm-dev { width: 171px; }
.bm-tuf { width: 186px; }
.bm-ln { width: 155px; }
.dev-logo {
  width: 20px; height: 18px; background: #000; color: #fff;
  font-size: 9px; font-weight: 700; line-height: 18px; text-align: center; letter-spacing: -.5px; flex: none;
}
.tuf-logo {
  width: 19px; height: 19px; border-radius: 50%; background: #d7152f; color: #fff;
  font-size: 7px; font-weight: 700; line-height: 19px; text-align: center; letter-spacing: 0; flex: none;
}
.wa-num { font-size: 11px; font-weight: 700; fill: #128c4a; text-anchor: middle; font-family: "Noto Sans", sans-serif; }
.bm-more { width: 24px; font-size: 16px; font-weight: 700; flex: none; line-height: 1; padding-bottom: 3px; }
.bm-other {
  display: flex; align-items: center; gap: 12px; height: 24px;
  border-left: 1px solid #666; padding-left: 14px; white-space: nowrap; flex: none;
}
.bm-other svg { width: 16px; height: 20px; }

/* page */
.page { flex: 1; display: flex; min-height: 0; }
.sidebar { width: 320px; background: #ff7225; color: #fff; flex: none; }
.logo { font-size: 40px; font-weight: 700; text-align: center; line-height: 54px; padding-top: 28px; }
.side-nav { list-style: none; margin: 48px 0 0; padding: 0 0 0 35px; font-size: 17px; }
.side-nav li { height: 55px; line-height: 55px; }

.main { flex: 1; padding-left: 79px; overflow: hidden; min-width: 0; }

/* map */
.map { position: relative; width: 1125px; height: 262px; overflow: hidden; }
.map-svg { width: 1125px; height: 262px; }
.map-geo { filter: blur(.35px); }
.urban { fill: #f2efe9; }
.pale { fill: #e6d9e6; }
.water { fill: #aad3df; }
.seam { fill: none; stroke: #bedcaf; stroke-width: 1; vector-effect: non-scaling-stroke; }
.river { fill: none; stroke: #aad3df; stroke-width: 2.500; vector-effect: non-scaling-stroke; stroke-linejoin: round; }
.road { fill: none; stroke: #fff; stroke-width: 1.600; vector-effect: non-scaling-stroke; stroke-linejoin: round; stroke-linecap: round; }
.road-thin { stroke-width: 1.300; }
.trunk-case { fill: none; stroke: #e58f78; stroke-width: 7.500; vector-effect: non-scaling-stroke; stroke-linejoin: round; opacity: .6; }
.trunk { fill: none; stroke: #f9a58e; stroke-width: 6.500; vector-effect: non-scaling-stroke; stroke-linejoin: round; stroke-linecap: round; }
.yellow { fill: none; stroke: #f4f6b0; stroke-width: 5; vector-effect: non-scaling-stroke; stroke-linecap: round; }
.border-line { fill: none; stroke: #aa9ba8; stroke-width: 2; stroke-dasharray: 14 3 3 3; vector-effect: non-scaling-stroke; }
.tree path { fill: none; stroke: #93bd8c; stroke-width: 1; vector-effect: non-scaling-stroke; }
.plane { fill: #7a59c0; }
.lbl-air { font: italic 11.500px "Noto Sans", sans-serif; fill: #7a59c0; text-anchor: middle; stroke: #fff; stroke-width: 1.500px; stroke-opacity: .6; paint-order: stroke; }
.lbl-town { font: 16.500px "Noto Sans", sans-serif; fill: #3c3c3c; stroke: #fff; stroke-width: 2px; stroke-opacity: .7; paint-order: stroke; }
.lbl-small { font: 14.800px "Noto Sans", sans-serif; fill: #3c3c3c; stroke: #fff; stroke-width: 2px; stroke-opacity: .7; paint-order: stroke; }
.lbl-bound { font: 12.500px "Noto Sans", sans-serif; fill: #a88aa8; stroke: #fff; stroke-width: 1.500px; stroke-opacity: .6; paint-order: stroke; }
.lbl-river { font: 12px "Noto Sans", sans-serif; fill: #8b7fb0; }
.attrib {
  position: absolute;
  right: 0;
  bottom: 0;
  height: 20px;
  padding: 0 6px;
  background: rgba(255, 255, 255, .8);
  font: 14px/19px "Liberation Sans", Arial, sans-serif;
  letter-spacing: -0.15px;
  color: #333;
  white-space: nowrap;
}
.attrib a { color: #0078a8; }
.flag { display: inline-block; width: 15px; height: 10px; vertical-align: -1px; }

/* heading */
.head-row {
  width: 1421px;
  margin-top: 64px;
  height: 42px;
  display: flex;
  align-items: center;
  justify-content: space-between;
}
.title { margin: 0; padding-top: 2px; font-size: 28.500px; font-weight: 700; color: #000; line-height: 42px; }
.add-btn {
  width: 142px;
  height: 42px;
  padding: 3px 0 0;
  background: #90ee90;
  border: 1px solid #000;
  border-radius: 6px;
  font: 700 19px/37px "Noto Sans", sans-serif;
  color: #000;
}

/* data grid */
.grid {
  width: 1279px;
  height: 499px;
  margin-top: 24px;
  border: 1px solid #e0e0e0;
  border-radius: 4px;
  display: flex;
  flex-direction: column;
  font: 18px Roboto, sans-serif;
  color: #444;
}
.grid-head { height: 70px; padding-bottom: 2px; border-bottom: 1px solid #e0e0e0; display: flex; align-items: center; flex: none; }
.cell { padding-left: 10px; }
.cell-check { width: 65px; padding-left: 20px; display: flex; }
.cell-id { width: 113px; }
.cell-name { width: 177px; }
.checkbox { width: 22px; height: 22px; border: 2.500px solid #666; border-radius: 3px; display: block; }
.grid-body {
  position: relative;
  height: 363px;
  border-bottom: 1px solid #e0e0e0;
  display: flex;
  align-items: center;
  justify-content: center;
  flex: none;
}
.empty { padding-bottom: 2px; }
.grid-scroll {
  position: absolute;
  right: 0;
  top: 0;
  bottom: 0;
  width: 20px;
  background: #f1f1f1;
  display: flex;
  flex-direction: column;
  align-items: center;
  justify-content: space-between;
  padding: 9px 0 9px;
}
.arrow { width: 10px; height: 6px; flex: none; }
.arrow path { fill: #a3a3a3; }
.grid-thumb { width: 17px; height: 321px; background: #a8a8a8; }
.grid-foot { flex: 1; display: flex; align-items: center; padding: 0 0 2px 1085px; }
.count { width: 100px; flex: none; font-size: 17.500px; }
.pager { width: 14px; height: 20px; flex: none; }
.pager path { fill: none; stroke: #bdbdbd; stroke-width: 2.200; }
.pager-prev { margin-right: 36px; margin-left: 7px; }

/* page scrollbar */
.page-scroll {
  width: 21px;
  background: #f1f1f1;
  flex: none;
  display: flex;
  flex-direction: column;
  align-items: center;
  justify-content: space-between;
  padding: 10px 0 8px;
}
.page-thumb { width: 17px; height: 546px; background: #c1c1c1; margin-top: 308px; margin-bottom: 10px; }

/* taskbar */
.taskbar {
  height: 60px;
  background: #1c1c1c;
  border-top: 1px solid #2e2e2e;
  display: flex;
  align-items: center;
  color: #fff;
  padding-left: 490px;
  flex: none;
}
.tb-win { width: 55px; display: flex; justify-content: center; flex: none; }
.tb-win svg { width: 29px; height: 29px; }
.tb-search {
  width: 275px;
  height: 40px;
  margin-left: 3px;
  border-radius: 20px;
  background: #333;
  display: flex;
  align-items: center;
  padding-left: 15px;
  color: #cfcfcf;
  font-size: 17px;
  flex: none;
  position: relative;
}
.tb-glass { width: 19px; height: 19px; margin-right: 12px; flex: none; }
.tb-art { width: 72px; height: 36px; margin-left: auto; margin-right: 2px; align-self: flex-end; }
.tb-icons { display: flex; margin-left: 2px; flex: none; }
.tb-i { position: relative; width: 55px; height: 50px; display: flex; align-items: center; justify-content: center; flex: none; }
.tb-i svg { width: 30px; height: 30px; }
.dot::after {
  content: "";
  position: absolute;
  left: 50%;
  bottom: 0;
  width: 6px;
  height: 6px;
  margin-left: -3px;
  border-radius: 50%;
  background: #9a9a9a;
}
.tb-active { background: #2b2b2b; border-radius: 4px; }
.tb-active::after {
  content: "";
  position: absolute;
  left: 50%;
  bottom: 0;
  width: 20px;
  height: 4px;
  margin-left: -10px;
  border-radius: 2px;
  background: #4cc2ff;
}
.badge-h { font: 700 9px "Noto Sans", sans-serif; fill: #fff; text-anchor: middle; }
.badge-t { font: 700 12px "Noto Sans", sans-serif; fill: #fff; text-anchor: middle; }
.tray { margin-left: auto; display: flex; align-items: center; padding-right: 25px; flex: none; font-size: 15px; color: #eee; }
.tray-chev { width: 14px; height: 10px; margin-right: 23px; }
.tray-lang { width: 36px; display: flex; flex-direction: column; align-items: center; line-height: 20px; margin-right: 18px; padding-bottom: 2px; }
.tray-ic { width: 22px; height: 18px; margin-right: 8px; }
.tray-clock { display: flex; flex-direction: column; align-items: flex-end; line-height: 20px; width: 90px; margin-left: -1px; padding-bottom: 2px; }
.tray-badge {
  width: 20px; height: 20px; margin-left: 14px; border-radius: 50%;
  background: #3fb6ff; color: #10222e; font-size: 12px; line-height: 20px; text-align: center;
}
```
